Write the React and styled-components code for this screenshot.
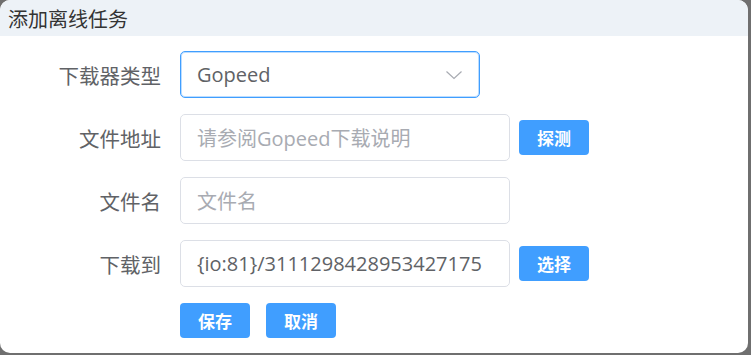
import styled, { createGlobalStyle } from "styled-components";

const GlobalStyle = createGlobalStyle`
    html, body {
        margin: 0;
        padding: 0;
        background: #6f6f6f;
    }
    body {
        font-family: "Open Sans", "Noto Sans CJK SC", sans-serif;
    }
`;

const Dialog = styled.div`
    width: 748px;
    height: 353px;
    background: #fff;
    border-radius: 10px;
    overflow: hidden;
    display: flex;
    flex-direction: column;
`;

const Header = styled.div`
    height: 36px;
    background: #edf2f7;
    display: flex;
    align-items: center;
    padding-left: 8px;
    font-family: "Noto Sans CJK SC", sans-serif;
    font-size: 20px;
    color: #333;
    box-sizing: border-box;
`;

const Form = styled.div`
    display: grid;
    grid-template-columns: 161px auto;
    column-gap: 19px;
    row-gap: 16px;
    padding-top: 15px;
    align-items: center;
`;

const Label = styled.div`
    text-align: right;
    font-family: "Noto Sans CJK SC", sans-serif;
    font-size: 20.5px;
    color: #606266;
`;

const Field = styled.div`
    display: flex;
    align-items: center;
    gap: 9px;
`;

const Box = styled.div`
    box-sizing: border-box;
    width: ${p => p.$width || 330}px;
    height: 47px;
    border: 1px solid ${p => (p.$focused ? "#409eff" : "#dcdfe6")};
    box-shadow: ${p => (p.$focused ? "inset 0 0 0 1px rgba(64, 158, 255, 0.35)" : "none")};
    border-radius: 5px;
    display: flex;
    align-items: center;
    justify-content: space-between;
    padding: 0 16px;
    font-size: 20px;
    color: ${p => (p.$placeholder ? "#a8abb2" : "#606266")};
    white-space: nowrap;
`;

const Button = styled.button`
    box-sizing: border-box;
    width: 70px;
    height: 35px;
    border: none;
    border-radius: 4px;
    background: #409eff;
    color: #fff;
    font-family: "Noto Sans CJK SC", sans-serif;
    font-size: 17px;
    font-weight: 700;
    padding: 0;
`;

const Actions = styled.div`
    display: flex;
    gap: 16px;
`;

function Chevron() {
    return (
        <svg width="18" height="10" viewBox="0 0 18 10" fill="none">
            <path d="M1.5 1.5 L9 8.5 L16.5 1.5" stroke="#a8abb2" strokeWidth="1.2" />
        </svg>
    );
}

export default function App() {
    return (
        <>
            <GlobalStyle />
            <Dialog>
                <Header>添加离线任务</Header>
                <Form>
                    <Label>下载器类型</Label>
                    <Field>
                        <Box $width={300} $focused>
                            Gopeed
                            <Chevron />
                        </Box>
                    </Field>

                    <Label>文件地址</Label>
                    <Field>
                        <Box $placeholder>请参阅Gopeed下载说明</Box>
                        <Button>探测</Button>
                    </Field>

                    <Label>文件名</Label>
                    <Field>
                        <Box $placeholder>文件名</Box>
                    </Field>

                    <Label>下载到</Label>
                    <Field>
                        <Box>{"{io:81}/3111298428953427175"}</Box>
                        <Button>选择</Button>
                    </Field>

                    <div />
                    <Actions>
                        <Button>保存</Button>
                        <Button>取消</Button>
                    </Actions>
                </Form>
            </Dialog>
        </>
    );
}
